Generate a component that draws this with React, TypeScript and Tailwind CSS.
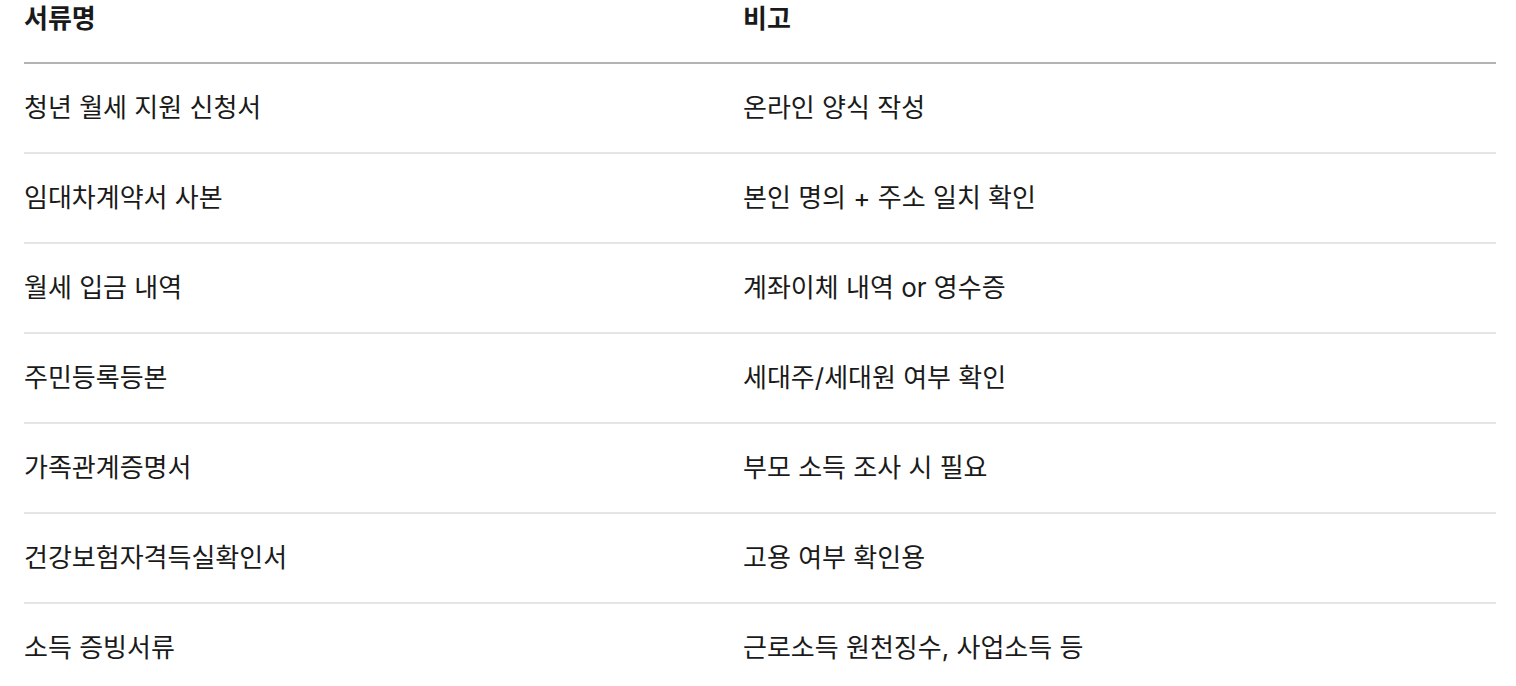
import React from "react";

const rows: [string, string][] = [
  ["청년 월세 지원 신청서", "온라인 양식 작성"],
  ["임대차계약서 사본", "본인 명의 + 주소 일치 확인"],
  ["월세 입금 내역", "계좌이체 내역 or 영수증"],
  ["주민등록등본", "세대주/세대원 여부 확인"],
  ["가족관계증명서", "부모 소득 조사 시 필요"],
  ["건강보험자격득실확인서", "고용 여부 확인용"],
  ["소득 증빙서류", "근로소득 원천징수, 사업소득 등"],
];

export default function App() {
  return (
    <div
      className="w-[1516px] h-[686px] overflow-hidden bg-white text-[#1a1a1a]"
      style={{ fontFamily: 'Inter, "Noto Sans CJK KR", "Noto Sans", sans-serif' }}
    >
      <div className="ml-[24px] w-[1472px]">
        <div className="grid grid-cols-[719px_1fr] h-[64px] border-b-2 border-[#b3b3b3] pt-[2px] text-[26px] font-bold leading-[34px]">
          <div>서류명</div>
          <div>비고</div>
        </div>
        {rows.map(([a, b], i) => (
          <div
            key={i}
            className="grid grid-cols-[719px_1fr] h-[90px] items-center border-b-2 border-[#e5e5e5] text-[26px] leading-[34px]"
          >
            <div>{a}</div>
            <div>{b}</div>
          </div>
        ))}
      </div>
    </div>
  );
}
